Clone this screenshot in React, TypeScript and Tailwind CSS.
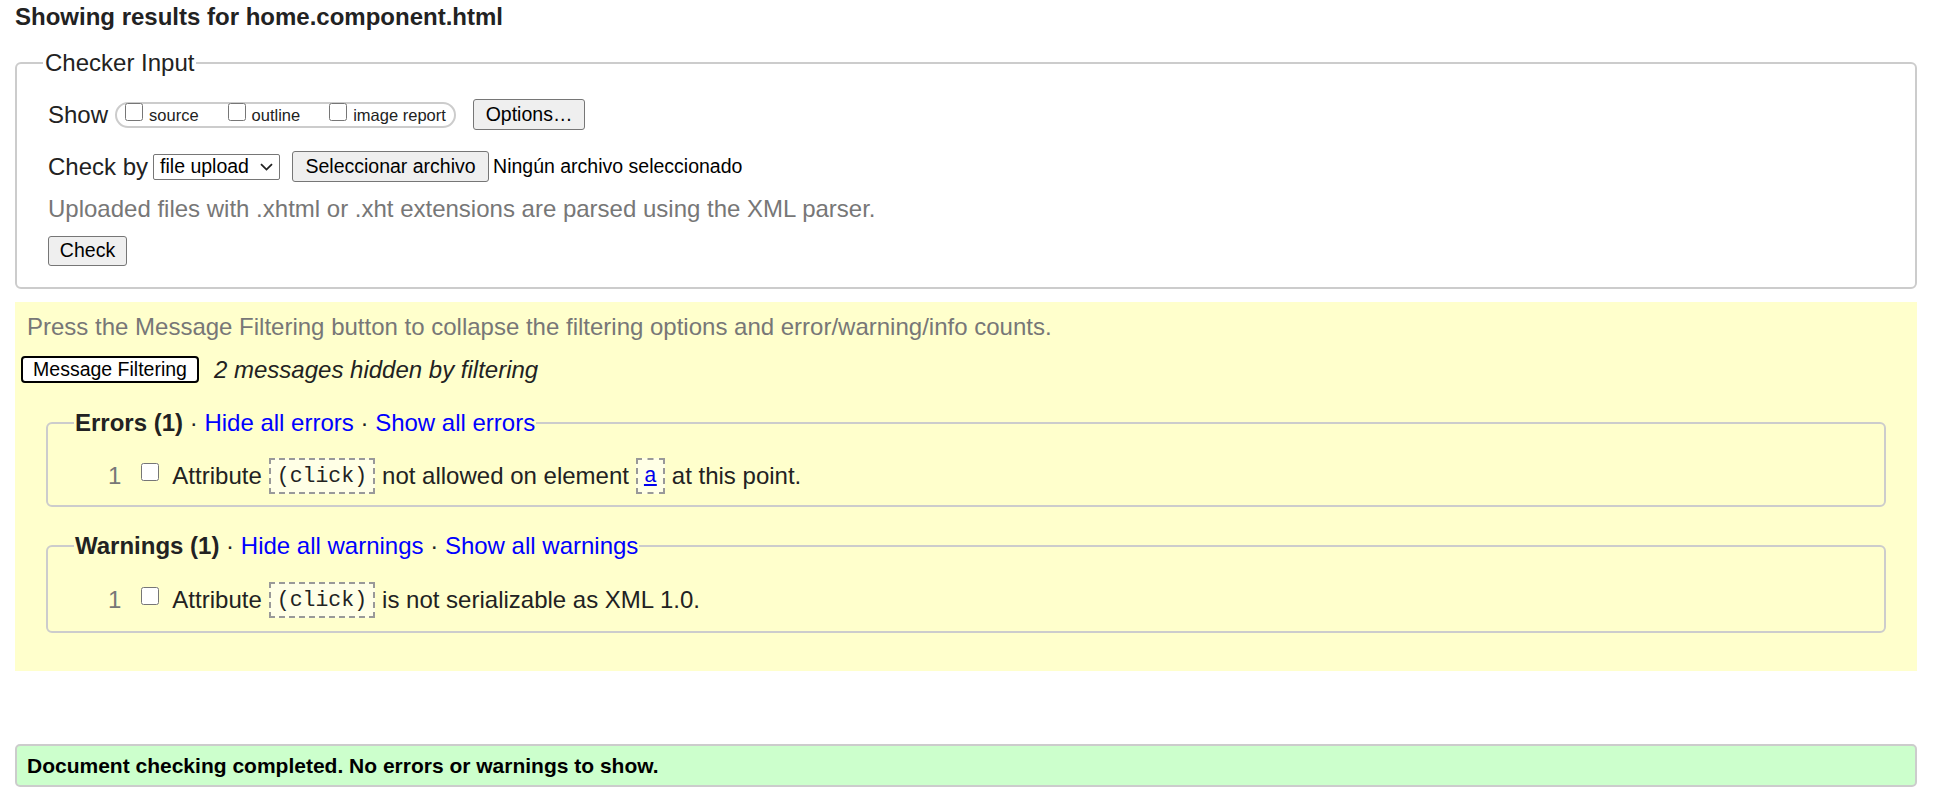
import type { ReactNode } from 'react';

function Code({ children }: { children: ReactNode }) {
  return (
    <span className="inline-flex h-[36px] items-center border-2 border-dashed border-[#999] bg-[#ffffe6] px-[6px] font-['Liberation_Mono',monospace] text-[21.5px] text-[#222]">
      {children}
    </span>
  );
}

function MessageRow({ parts }: { parts: ReactNode[] }) {
  return (
    <div className="flex h-[36px] items-center pl-[34px]">
      <span className="text-[24px] leading-[28px] text-[#777]">1</span>
      <input type="checkbox" className="mb-[8px] ml-[20px] h-[18px] w-[18px] shrink-0" />
      <div className="ml-[13px] flex items-center gap-[7px] text-[24px] leading-[28px] text-[#222]">
        {parts}
      </div>
    </div>
  );
}

function Group({
  title,
  what,
  parts,
  className,
}: {
  title: string;
  what: string;
  parts: ReactNode[];
  className: string;
}) {
  return (
    <fieldset className={`mx-[25px] rounded-[6px] border-2 border-[#ccc] px-[26px] ${className}`}>
      <legend className="px-[1px] text-[24px] leading-[28px] text-[#222]">
        <span className="font-bold">{title}</span> ·{' '}
        <a href="#" className="text-[#0000ff]">
          Hide all {what}
        </a>{' '}
        ·{' '}
        <a href="#" className="text-[#0000ff]">
          Show all {what}
        </a>
      </legend>
      <MessageRow parts={parts} />
    </fieldset>
  );
}

const btn =
  'flex items-center justify-center rounded-[3px] border border-[#767676] bg-[#efefef] text-[19.5px] text-black';

export default function App() {
  return (
    <div className="min-h-screen bg-white pl-[15px] pr-[21px] pt-[3px] font-['Liberation_Sans',Arial,sans-serif] text-[#222]">
      <h2 className="text-[24px] font-bold leading-[28px]">Showing results for home.component.html</h2>

      {/* Checker input */}
      <fieldset className="mt-[18px] rounded-[6px] border-2 border-[#ccc] px-[26px] pb-[21px]">
        <legend className="px-[2px] text-[24px] leading-[28px]">Checker Input</legend>
        <div className="pl-[5px] pt-[22px]">
          <div className="flex h-[31px] items-center">
            <span className="text-[24px] leading-[28px]">Show</span>
            <div className="ml-[7px] flex h-[26px] w-[341px] items-center rounded-full border-2 border-[#ccc] pl-[8px] text-[16.5px]">
              <label className="flex items-center">
                <input type="checkbox" className="mb-[6px] h-[18px] w-[18px]" />
                <span className="ml-[6px] mt-[2px]">source</span>
              </label>
              <label className="ml-[29px] flex items-center">
                <input type="checkbox" className="mb-[6px] h-[18px] w-[18px]" />
                <span className="ml-[6px] mt-[2px]">outline</span>
              </label>
              <label className="ml-[29px] flex items-center">
                <input type="checkbox" className="mb-[6px] h-[18px] w-[18px]" />
                <span className="ml-[6px] mt-[2px]">image report</span>
              </label>
            </div>
            <button type="button" className={`${btn} ml-[17px] h-[31px] w-[112px]`}>
              Options…
            </button>
          </div>

          <div className="mt-[21px] flex h-[31px] items-center">
            <span className="text-[24px] leading-[28px]">Check by</span>
            <div className="ml-[5px] flex h-[26px] w-[127px] items-center justify-between rounded-[2px] border border-[#767676] bg-white px-[6px] text-[19.5px] text-black">
              <span>file upload</span>
              <svg width="13" height="8" viewBox="0 0 13 8" fill="none">
                <path d="M1 1.2 L6.5 6.6 L12 1.2" stroke="#222" strokeWidth="1.8" />
              </svg>
            </div>
            <button type="button" className={`${btn} ml-[12px] h-[31px] w-[197px]`}>
              Seleccionar archivo
            </button>
            <span className="ml-[4px] text-[19.5px] text-black">Ningún archivo seleccionado</span>
          </div>

          <p className="mt-[13px] text-[24px] leading-[28px] text-[#777]">
            Uploaded files with .xhtml or .xht extensions are parsed using the XML parser.
          </p>

          <button type="button" className={`${btn} mt-[13px] h-[30px] w-[79px]`}>
            Check
          </button>
        </div>
      </fieldset>

      {/* Message filtering */}
      <div className="mt-[13px] bg-[#ffffcc] px-[6px] pb-[38px] pt-[11px]">
        <p className="pl-[6px] text-[24px] leading-[28px] text-[#777]">
          Press the Message Filtering button to collapse the filtering options and error/warning/info counts.
        </p>
        <div className="mt-[15px] flex h-[27px] items-center">
          <button
            type="button"
            className="flex h-[27px] w-[178px] items-center justify-center rounded-[4px] border-2 border-black bg-white text-[19.5px] text-black"
          >
            Message Filtering
          </button>
          <span className="ml-[15px] text-[24px] italic leading-[28px]">2 messages hidden by filtering</span>
        </div>

        <Group
          title="Errors (1)"
          what="errors"
          className="mt-[26px] pb-[11px] [&>div]:mt-[21px]"
          parts={[
            <span key="a">Attribute</span>,
            <Code key="b">(click)</Code>,
            <span key="c">not allowed on element</span>,
            <Code key="d">
              <a href="#" className="text-[#0000ee] underline">
                a
              </a>
            </Code>,
            <span key="e">at this point.</span>,
          ]}
        />

        <Group
          title="Warnings (1)"
          what="warnings"
          className="mt-[25px] pb-[13px] [&>div]:mt-[22px]"
          parts={[
            <span key="a">Attribute</span>,
            <Code key="b">(click)</Code>,
            <span key="c">is not serializable as XML 1.0.</span>,
          ]}
        />
      </div>

      <div className="mt-[73px] flex h-[43px] items-center rounded-[5px] border-2 border-[#ccc] bg-[#ccffcc] pl-[10px]">
        <span className="text-[21px] font-bold leading-[26px] text-black">
          Document checking completed. No errors or warnings to show.
        </span>
      </div>
    </div>
  );
}
